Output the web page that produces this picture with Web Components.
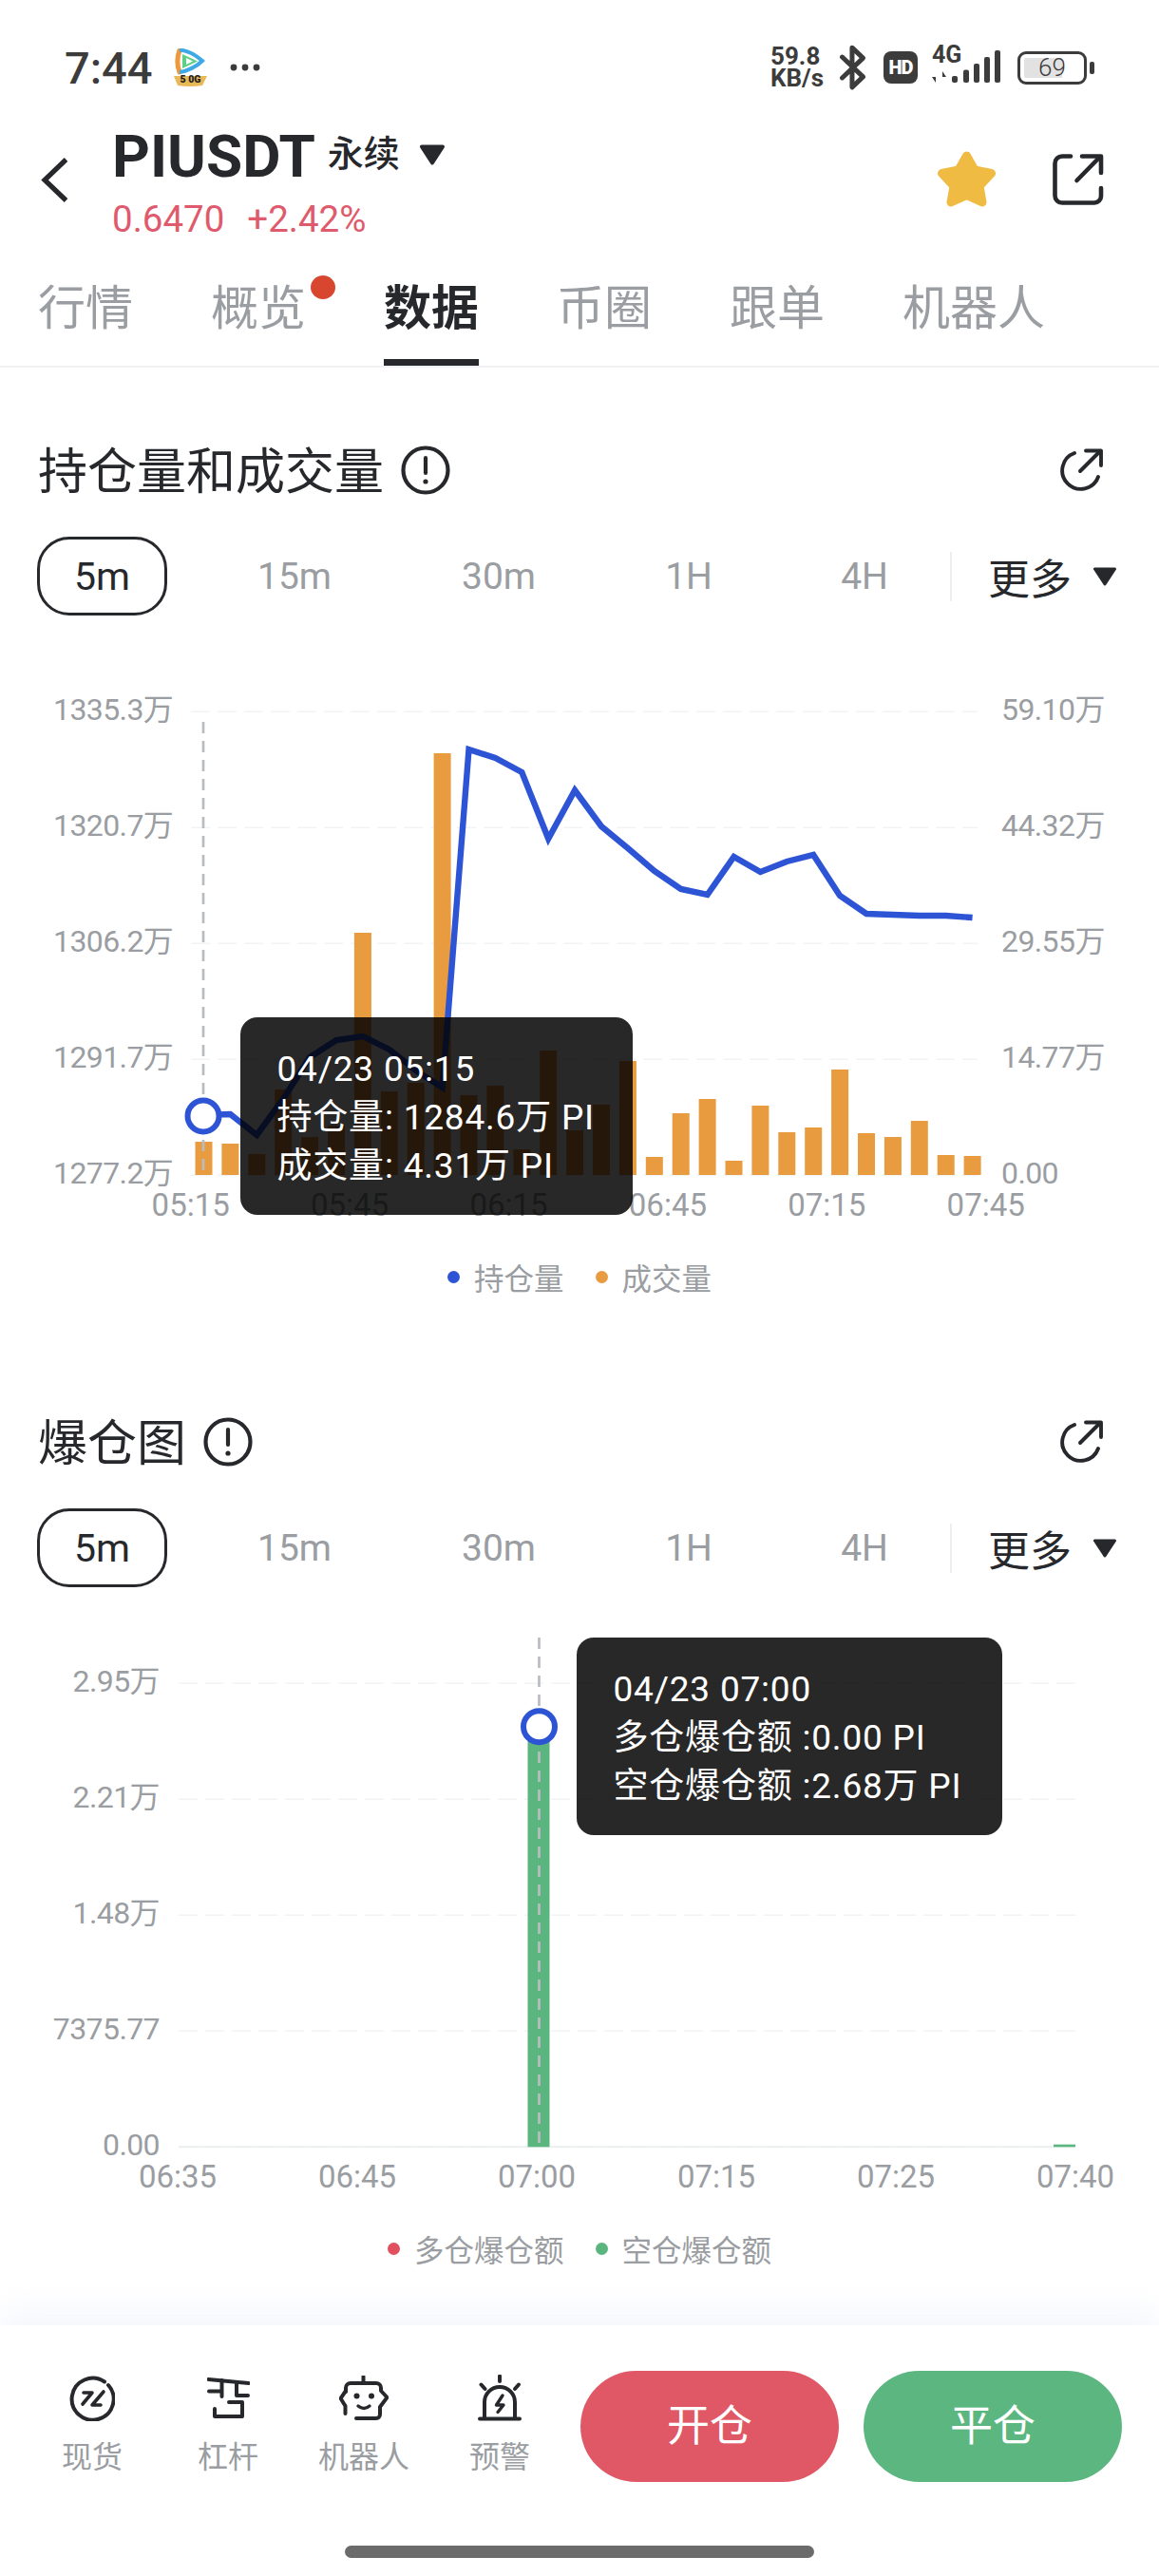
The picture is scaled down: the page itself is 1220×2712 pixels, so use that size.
<!DOCTYPE html>
<html lang="zh">
<head>
<meta charset="utf-8">
<title>PIUSDT 数据</title>
<style>
  html, body { margin: 0; padding: 0; background: #fff; }
  body { width: 1220px; font-family: Roboto, "Noto Sans CJK SC", sans-serif; color: #26282c; overflow-x: hidden; }
</style>
</head>
<body>
<status-bar></status-bar>
<market-header></market-header>
<tab-strip></tab-strip>

<chart-card heading="持仓量和成交量">
  <oi-chart>
    <chart-tip style="--x:253px;--y:423px;--w:413px;">
      <div>04/23 05:15</div>
      <div>持仓量: 1284.6万 PI</div>
      <div>成交量: 4.31万 PI</div>
    </chart-tip>
  </oi-chart>
  <chart-legend>
    <legend-item color="#2e54d6">持仓量</legend-item>
    <legend-item color="#e89b3f">成交量</legend-item>
  </chart-legend>
</chart-card>

<chart-card heading="爆仓图">
  <liq-chart>
    <chart-tip style="--x:607px;--y:53px;--w:448px;">
      <div>04/23 07:00</div>
      <div>多仓爆仓额 :0.00 PI</div>
      <div>空仓爆仓额 :2.68万 PI</div>
    </chart-tip>
  </liq-chart>
  <chart-legend>
    <legend-item color="#e0505f">多仓爆仓额</legend-item>
    <legend-item color="#5ab57f">空仓爆仓额</legend-item>
  </chart-legend>
</chart-card>

<action-bar></action-bar>

<script>
class StatusBar extends HTMLElement {
  constructor() {
    super();
    this.attachShadow({ mode: 'open' });
    this.shadowRoot.innerHTML = `
      <style>
        :host { display: flex; align-items: center; height: 142px; padding: 0 68px; box-sizing: border-box; color: #3c3c3c; }
        #time { font-size: 47px; font-weight: 500; line-height: 1; }
        #app { margin-left: 19px; display: block; }
        #dots { margin-left: 21px; display: block; }
        #right { margin-left: auto; display: flex; align-items: center; }
        #speed { width: 60px; font-weight: 700; line-height: 23px; white-space: nowrap; }
        #speed div:first-child { font-size: 26px; }
        #speed div:last-child { font-size: 26px; }
        #bt { margin-left: 12px; display: block; }
        #hd { margin-left: 17px; width: 36px; height: 34px; border-radius: 8px; background: #3c3c3c; color: #fff; font-size: 20px; font-weight: 900; display: flex; align-items: center; justify-content: center; letter-spacing: -1px; }
        #sig { margin-left: 15px; display: block; overflow: visible; }
        #bat { margin-left: 18px; width: 73px; height: 35px; box-sizing: border-box; border: 3px solid #3c3c3c; border-radius: 9px; padding: 4px; }
        #fill { height: 100%; background: linear-gradient(to right, #e2e2e2 68%, transparent 68%); border-radius: 2px; display: flex; align-items: center; justify-content: center; font-size: 26px; font-weight: 300; padding-right: 0; }
        #nub { margin-left: 3px; width: 5px; height: 13px; background: #3c3c3c; border-radius: 2px; }
      </style>
      <span id="time">7:44</span>
      <svg id="app" width="41" height="40" viewBox="0 0 41 40">
        <path d="M9 2 C6 10 6 17 9 25" fill="none" stroke="#ee9a3c" stroke-width="5" stroke-linecap="round"/>
        <path d="M9 1.5 C17 2 26 7 33 13 C27 19 17 24 9 25" fill="none" stroke="#3fa9e8" stroke-width="4"/>
        <path d="M12 6 L28 13.5 L12 21 Z" fill="#5fcf86"/>
        <path d="M16 10 L23 13.5 L16 17 Z" fill="#fff"/>
        <path d="M3 29 H38 L33 39 Q20 41 7 39 Z" fill="#e8b957"/>
        <text x="20.5" y="36" text-anchor="middle" font-size="10.5" font-weight="900" fill="#222">5 0G</text>
      </svg>
      <svg id="dots" width="32" height="8" viewBox="0 0 32 8" fill="#3c3c3c"><circle cx="4" cy="4" r="3.4"/><circle cx="16" cy="4" r="3.4"/><circle cx="28" cy="4" r="3.4"/></svg>
      <div id="right">
        <div id="speed"><div>59.8</div><div>KB/s</div></div>
        <svg id="bt" width="30" height="48" viewBox="0 0 28 46" fill="none" stroke="#3c3c3c" stroke-width="4.8" stroke-linejoin="round" stroke-linecap="round"><path d="M3 12.5 L24 32.5 L13 43 V3 L24 13.5 L3 33.5"/></svg>
        <div id="hd">HD</div>
        <svg id="sig" width="72" height="36" viewBox="0 0 72 36" fill="#3c3c3c">
          <text x="0" y="13" font-size="25" font-weight="700">4G</text>
          <rect x="21" y="27" width="6" height="7" rx="2"/><rect x="33" y="20.5" width="6" height="13.5" rx="2"/><rect x="44" y="14" width="6" height="20" rx="2"/><rect x="55" y="7" width="6" height="27" rx="2"/><rect x="66" y="0" width="6" height="34" rx="2"/>
          <path d="M4 22 V34 L0 28 H4 Z M11 34 V22 L15 28 H11 Z"/>
        </svg>
        <div id="bat"><div id="fill">69</div></div>
        <div id="nub"></div>
      </div>
    `;
  }
}
customElements.define('status-bar', StatusBar);

class MarketHeader extends HTMLElement {
  constructor() {
    super();
    this.attachShadow({ mode: 'open' });
    this.shadowRoot.innerHTML = `
      <style>
        :host { display: flex; align-items: flex-start; height: 148px; padding: 0 58px 0 43px; box-sizing: border-box; }
        #back { margin-top: 24px; flex: none; display: block; }
        #info { margin-left: 47px; }
        #name { display: flex; align-items: center; height: 46px; }
        #sym { font-size: 62px; font-weight: 700; line-height: 46px; }
        #kind { margin-left: 13px; font-size: 38px; line-height: 46px; font-weight: 500; position: relative; top: -3px; }
        #caret { margin-left: 20px; display: block; position: relative; top: -2px; }
        #price { margin-top: 20px; display: flex; gap: 24px; font-size: 38.5px; line-height: 46px; color: #de5a6c; }
        #star { margin-left: auto; margin-top: 16px; display: block; }
        #share { margin-left: 59px; margin-top: 20px; display: block; }
      </style>
      <svg id="back" width="28" height="47" viewBox="0 0 28 47" fill="none" stroke="#26282c" stroke-width="5.2"><path d="M26.5 2 L4 23.5 L26.5 45"/></svg>
      <div id="info">
        <div id="name"><span id="sym">PIUSDT</span><span id="kind">永续</span>
          <svg id="caret" width="28" height="22" viewBox="0 0 28 22"><path d="M3 2.5 H25 L14 19.5 Z" fill="#26282c" stroke="#26282c" stroke-width="4" stroke-linejoin="round"/></svg>
        </div>
        <div id="price"><span>0.6470</span><span>+2.42%</span></div>
      </div>
      <svg id="star" width="63" height="60" viewBox="0 0 63 60"><path d="M31.5 6 L40 21 L57.5 24.5 L45 38 L48 55 L31.5 47.5 L15 55 L18 38 L5.5 24.5 L23 21 Z" fill="#f0bb43" stroke="#f0bb43" stroke-width="9" stroke-linejoin="round"/></svg>
      <svg id="share" width="54" height="54" viewBox="0 0 54 54" fill="none" stroke="#26282c" stroke-width="4.6" stroke-linecap="round" stroke-linejoin="round">
        <path d="M19 2.5 H10 A7.5 7.5 0 0 0 2.5 10 V44 A7.5 7.5 0 0 0 10 51.5 H44 A7 7 0 0 0 51 44.5 V36"/>
        <path d="M25.5 28 L49 4"/><path d="M31 2.5 H51 V20"/>
      </svg>
    `;
  }
}
customElements.define('market-header', MarketHeader);

class TabStrip extends HTMLElement {
  constructor() {
    super();
    this.attachShadow({ mode: 'open' });
    const tabs = ['行情', '概览', '数据', '币圈', '跟单', '机器人'];
    this.shadowRoot.innerHTML = `
      <style>
        :host { display: flex; gap: 82px; padding-left: 40px; height: 97px; box-sizing: border-box; border-bottom: 2px solid #f0f1f2; }
        .tab { position: relative; height: 95px; box-sizing: border-box; font-size: 50px; line-height: 70px; color: #9a9da1; white-space: nowrap; }
        .on { color: #26282c; font-weight: 700; border-bottom: 7px solid #26282c; }
        .dot { position: absolute; left: 105px; top: 0; width: 26px; height: 25px; border-radius: 50%; background: #d9462f; }
      </style>
      ${tabs.map((t, i) => `<div class="tab ${i === 2 ? 'on' : ''}">${t}${i === 1 ? '<span class="dot"></span>' : ''}</div>`).join('')}
    `;
  }
}
customElements.define('tab-strip', TabStrip);

class TimePicker extends HTMLElement {
  constructor() {
    super();
    this.attachShadow({ mode: 'open' });
    this.shadowRoot.innerHTML = `
      <style>
        :host { display: flex; align-items: center; height: 83px; padding-left: 39px; font-size: 39px; color: #9a9da1; }
        #cells { display: grid; grid-template-columns: 137px 268px 162px 238px 132px; align-items: center; text-align: center; }
        #active { height: 83px; box-sizing: border-box; border: 3.5px solid #26282c; border-radius: 34px; color: #26282c; font-size: 41px; display: flex; align-items: center; justify-content: center; }
        #sep { margin-left: 24px; width: 2px; height: 52px; background: #eceef0; }
        #more { margin-left: 38px; font-size: 44px; color: #26282c; white-space: nowrap; }
        svg { margin-left: 22px; display: block; }
      </style>
      <div id="cells">
        <div id="active">5m</div><div>15m</div><div>30m</div><div>1H</div><div>4H</div>
      </div>
      <div id="sep"></div>
      <div id="more">更多</div>
      <svg width="26" height="20" viewBox="0 0 26 20"><path d="M2.5 2 H23.5 L13 18 Z" fill="#26282c" stroke="#26282c" stroke-width="3" stroke-linejoin="round"/></svg>
    `;
  }
}
customElements.define('time-picker', TimePicker);

class ChartCard extends HTMLElement {
  constructor() {
    super();
    this.attachShadow({ mode: 'open' });
    this.shadowRoot.innerHTML = `
      <style>
        :host { display: block; height: 1023px; box-sizing: border-box; padding-top: 78px; }
        #head { display: flex; align-items: center; height: 60px; margin-bottom: 40px; padding: 0 59px 0 40px; }
        #title { font-size: 52px; line-height: 60px; white-space: nowrap; margin-top: 6px; }
        #tip { margin-left: 18px; display: block; }
        #out { margin-left: auto; display: block; }
      </style>
      <div id="head">
        <span id="title"></span>
        <svg id="tip" width="52" height="52" viewBox="0 0 52 52" fill="none" stroke="#26282c" stroke-width="4.2" stroke-linecap="round">
          <circle cx="26" cy="26" r="23.5"/><path d="M26 13 V29"/><circle cx="26" cy="38" r="1.6" fill="#26282c" stroke-width="2"/>
        </svg>
        <svg id="out" width="46" height="46" viewBox="0 0 46 46" fill="none" stroke="#26282c" stroke-width="3.9" stroke-linecap="round" stroke-linejoin="round">
          <path d="M16 5 A19.5 19.5 0 1 0 41 30"/><path d="M22 24 L42 4"/><path d="M28 2.5 H44 V18"/>
        </svg>
      </div>
      <time-picker></time-picker>
      <slot></slot>
    `;
    this.shadowRoot.getElementById('title').textContent = this.getAttribute('heading');
  }
}
customElements.define('chart-card', ChartCard);

const GRID_TOP = 101.3;
const GRID_STEP = 122;

class ChartCanvas extends HTMLElement {
  constructor() {
    super();
    this.attachShadow({ mode: 'open' });
    this.shadowRoot.innerHTML = `
      <style>
        :host { display: block; position: relative; height: 668px; }
        svg { display: block; }
        text { font-size: 32px; fill: #9a9da1; letter-spacing: -0.6px; }
        text.time { font-size: 33px; letter-spacing: 0; }
      </style>
      <svg width="1220" height="668" viewBox="0 0 1220 668">${this.draw()}</svg>
      <slot></slot>
    `;
  }

  grid(x1, x2) {
    let out = '';
    for (let i = 0; i < 5; i++) {
      const y = GRID_TOP + GRID_STEP * i;
      out += `<line x1="${x1}" x2="${x2}" y1="${y}" y2="${y}" stroke="#f2f3f5" stroke-width="1.6" stroke-dasharray="20 8"/>`;
    }
    return out;
  }

  crosshair(x, y1, y2) {
    return `<line x1="${x}" x2="${x}" y1="${y1}" y2="${y2}" stroke="#b9bcc1" stroke-width="2.7" stroke-dasharray="12 8"/>`;
  }

  marker(x, y) {
    return `<circle cx="${x}" cy="${y}" r="16.5" fill="#fff" stroke="#2e54d6" stroke-width="6"/>`;
  }
}

class OiChart extends ChartCanvas {
  draw() {
    const barTops = [1202, 1204, 1215, 1147, 1197, 1185, 982, 1149, 1140, 793, 1153, 1143, 1210, 1106, 1190, 1163, 1117, 1218, 1172, 1157, 1222, 1164, 1192, 1187, 1126, 1193, 1197, 1180, 1216, 1217];
    const line = [1174, 1173, 1195, 1157, 1113, 1095, 1091, 1105, 1127, 1145, 789, 798, 813, 883, 832, 870, 893, 917, 936, 942, 902, 918, 907, 900, 943, 962, 963, 964, 964, 966];
    const base = 1237 - 648;
    const pos = i => 214.5 + 27.9 * i;
    const left = ['1335.3万', '1320.7万', '1306.2万', '1291.7万', '1277.2万'];
    const right = ['59.10万', '44.32万', '29.55万', '14.77万', '0.00'];
    const times = ['05:15', '05:45', '06:15', '06:45', '07:15', '07:45'];
    return `
      ${this.grid(201, 1029)}
      ${barTops.map((t, i) => `<rect x="${pos(i) - 9}" y="${t - 648}" width="18" height="${base - (t - 648)}" fill="#e89b3f"/>`).join('')}
      ${this.crosshair(214, 112, base)}
      <polyline points="${line.map((y, i) => `${pos(i)},${y - 648}`).join(' ')}" fill="none" stroke="#2e54d6" stroke-width="6.4" stroke-linejoin="miter"/>
      ${this.marker(214, 527)}
      ${left.map((t, i) => `<text x="56" y="${GRID_TOP + GRID_STEP * i + 9}">${t}</text>`).join('')}
      ${right.map((t, i) => `<text x="1054" y="${GRID_TOP + GRID_STEP * i + 9}">${t}</text>`).join('')}
      ${times.map((t, i) => `<text class="time" x="${200.7 + 167.4 * i}" y="632" text-anchor="middle">${t}</text>`).join('')}
    `;
  }
}
customElements.define('oi-chart', OiChart);

class LiqChart extends ChartCanvas {
  draw() {
    const base = GRID_TOP + GRID_STEP * 4;
    const labels = ['2.95万', '2.21万', '1.48万', '7375.77', '0.00'];
    const times = ['06:35', '06:45', '07:00', '07:15', '07:25', '07:40'];
    return `
      ${this.grid(188, 1132)}
      <line x1="188" x2="1132" y1="${base}" y2="${base}" stroke="#eceef0" stroke-width="2"/>
      <rect x="555.5" y="${1833 - 1671}" width="23" height="${base - (1833 - 1671)}" fill="#5ab57f"/>
      <rect x="1109" y="${base - 2.6}" width="23" height="2.6" fill="#5ab57f"/>
      ${this.crosshair(567.5, 53, base)}
      ${this.marker(567.5, 146.7)}
      ${labels.map((t, i) => `<text x="168" y="${GRID_TOP + GRID_STEP * i + 9}" text-anchor="end">${t}</text>`).join('')}
      ${times.map((t, i) => `<text class="time" x="${187 + 189 * i}" y="632" text-anchor="middle">${t}</text>`).join('')}
    `;
  }
}
customElements.define('liq-chart', LiqChart);

class ChartTip extends HTMLElement {
  constructor() {
    super();
    this.attachShadow({ mode: 'open' });
    this.shadowRoot.innerHTML = `
      <style>
        :host { position: absolute; left: var(--x); top: var(--y); width: var(--w); height: 208px; box-sizing: border-box; padding: 28.5px 0 0 38.5px; border-radius: 18px; background: rgba(0, 0, 0, 0.843); color: #fff; font-size: 37px; line-height: 51px; letter-spacing: 0.8px; white-space: nowrap; }
      </style>
      <slot></slot>
    `;
  }
}
customElements.define('chart-tip', ChartTip);

class ChartLegend extends HTMLElement {
  constructor() {
    super();
    this.attachShadow({ mode: 'open' });
    this.shadowRoot.innerHTML = `
      <style>
        :host { display: flex; justify-content: center; align-items: center; gap: 33px; height: 56px; }
      </style>
      <slot></slot>
    `;
  }
}
customElements.define('chart-legend', ChartLegend);

class LegendItem extends HTMLElement {
  constructor() {
    super();
    this.attachShadow({ mode: 'open' });
    this.shadowRoot.innerHTML = `
      <style>
        :host { display: flex; align-items: center; gap: 15px; font-size: 31.5px; color: #9a9da1; white-space: nowrap; }
        i { width: 13px; height: 13px; border-radius: 50%; background: ${this.getAttribute('color')}; }
      </style>
      <i></i><slot></slot>
    `;
  }
}
customElements.define('legend-item', LegendItem);

class ActionBar extends HTMLElement {
  constructor() {
    super();
    this.attachShadow({ mode: 'open' });
    const stroke = 'fill="none" stroke="#26282c" stroke-width="4" stroke-linecap="round" stroke-linejoin="round"';
    const items = [
      ['现货', `<svg width="48" height="48" viewBox="0 0 48 48" ${stroke}><path d="M37 6.5 A22 22 0 1 0 41 10"/><path d="M15 18 H24 L14 30" stroke-width="3.6"/><path d="M36 17 L24 31 H33" stroke-width="3.6"/></svg>`],
      ['杠杆', `<svg width="45" height="44" viewBox="0 0 45 44" ${stroke}><path d="M1.5 2 L43.5 6"/><path d="M15.5 3 V20"/><path d="M2 14.5 H15"/><path d="M31 5 V19 H43"/><path d="M23 26 H37 V41 H8 V33"/></svg>`],
      ['机器人', `<svg width="52" height="47" viewBox="0 0 52 47" ${stroke}><path d="M25.5 1 V8"/><path d="M7 17 V13 A5 5 0 0 1 12 8 H39 A5 5 0 0 1 44 13 V16 L50.5 23 L43 33 V41 A4 4 0 0 1 39 45 H18"/><path d="M7 16 L1.5 24 L6.5 32 V40"/><circle cx="18.5" cy="21.5" r="3" fill="#26282c" stroke="none"/><circle cx="34" cy="21.5" r="3" fill="#26282c" stroke="none"/><path d="M20 32 Q26 37 32 32" stroke-width="3.4"/></svg>`],
      ['预警', `<svg width="46" height="49" viewBox="0 0 46 49" ${stroke}><path d="M2 46.5 H44"/><path d="M7 46 V29 A16 16 0 0 1 39 29 V46"/><path d="M23 1.5 V7"/><path d="M3.5 10.5 L7.5 15"/><path d="M43 10.5 L39 15"/><path d="M26 22 L19.5 32 H27 L21 39.5" stroke-width="3.4"/></svg>`]
    ];
    this.shadowRoot.innerHTML = `
      <style>
        :host { display: block; height: 264px; margin-top: 15px; box-sizing: border-box; padding-top: 48px; background: #fff; box-shadow: 0 -14px 34px rgba(236, 240, 248, 0.6); position: relative; }
        #row { display: flex; align-items: flex-start; padding-left: 25.5px; }
        .item { width: 143px; display: flex; flex-direction: column; align-items: center; padding-top: 4px; font-size: 32px; color: #9a9da1; white-space: nowrap; }
        .icon { height: 49px; display: flex; align-items: center; }
        .icon svg { display: block; }
        .item span { margin-top: 16px; line-height: 44px; }
        #btns { margin-left: 13.5px; display: flex; gap: 26px; }
        .btn { width: 272px; height: 117px; border-radius: 59px; color: #fff; font-size: 45px; line-height: 1; display: flex; align-items: center; justify-content: center; }
        .red { background: #e05866; }
        .green { background: #5bb680; }
        #home { width: 494px; height: 13px; margin: 67px auto 0; border-radius: 7px; background: #6b6b6b; }
      </style>
      <div id="row">
        ${items.map(([label, icon]) => `<div class="item"><div class="icon">${icon}</div><span>${label}</span></div>`).join('')}
        <div id="btns"><div class="btn red">开仓</div><div class="btn green">平仓</div></div>
      </div>
      <div id="home"></div>
    `;
  }
}
customElements.define('action-bar', ActionBar);
</script>
</body>
</html>
